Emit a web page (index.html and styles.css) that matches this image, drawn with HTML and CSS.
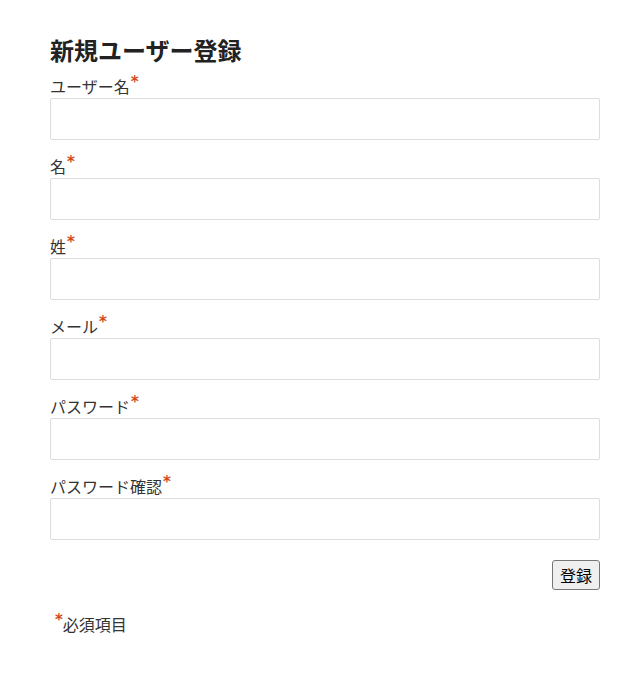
FILE: index.html
```html
<!DOCTYPE html>
<html lang="ja">
<head>
<meta charset="utf-8">
<title>新規ユーザー登録</title>
<link rel="stylesheet" href="styles.css">
</head>
<body>
<div class="page">
  <h1 class="title">新規ユーザー登録</h1>
  <form class="form">
    <div class="field">
      <label class="label">ユーザー名<span class="req">*</span></label>
      <input class="input" type="text">
    </div>
    <div class="field">
      <label class="label">名<span class="req">*</span></label>
      <input class="input" type="text">
    </div>
    <div class="field">
      <label class="label">姓<span class="req">*</span></label>
      <input class="input" type="text">
    </div>
    <div class="field">
      <label class="label">メール<span class="req">*</span></label>
      <input class="input" type="email">
    </div>
    <div class="field">
      <label class="label">パスワード<span class="req">*</span></label>
      <input class="input" type="password">
    </div>
    <div class="field">
      <label class="label">パスワード確認<span class="req">*</span></label>
      <input class="input" type="password">
    </div>
    <div class="actions">
      <button class="btn" type="button">登録</button>
    </div>
  </form>
  <p class="note"><span class="req">*</span>必須項目</p>
</div>
</body>
</html>
```
FILE: styles.css
```css
html, body {
  margin: 0;
  padding: 0;
  background: #fff;
}
body {
  font-family: "Noto Sans CJK JP", "Noto Sans", sans-serif;
  color: #333;
}
.page {
  width: 550px;
  margin: 0 0 0 50px;
  padding-top: 34px;
}
.title {
  font-size: 24px;
  font-weight: bold;
  color: #222;
  margin: 0 0 8px;
  line-height: 32px;
}
.form {
  display: flex;
  flex-direction: column;
}
.field {
  display: flex;
  flex-direction: column;
  margin-bottom: 14px;
}
.label {
  font-size: 16px;
  line-height: 24px;
  color: #333;
}
.req {
  color: #d24a1e;
  font-family: "DejaVu Sans", sans-serif;
  font-weight: bold;
  font-size: 15px;
  vertical-align: top;
  line-height: 16px;
  margin-left: 1px;
}
.input {
  box-sizing: border-box;
  height: 42px;
  width: 100%;
  border: 1px solid #ddd;
  border-radius: 2px;
  margin: 0;
  padding: 0 8px;
  font-size: 16px;
  background: #fff;
}
.actions {
  display: flex;
  justify-content: flex-end;
  margin-top: 6px;
}
.btn {
  font-family: "Noto Sans CJK JP", sans-serif;
  font-size: 16px;
  line-height: 20px;
  padding: 4px 7px;
  border: 1px solid #767676;
  border-radius: 3px;
  background: #efefef;
  color: #000;
}
.note {
  margin: 22px 0 0 5px;
  font-size: 16px;
  line-height: 24px;
  color: #333;
}
.note .req {
  margin-left: 0;
}
```
